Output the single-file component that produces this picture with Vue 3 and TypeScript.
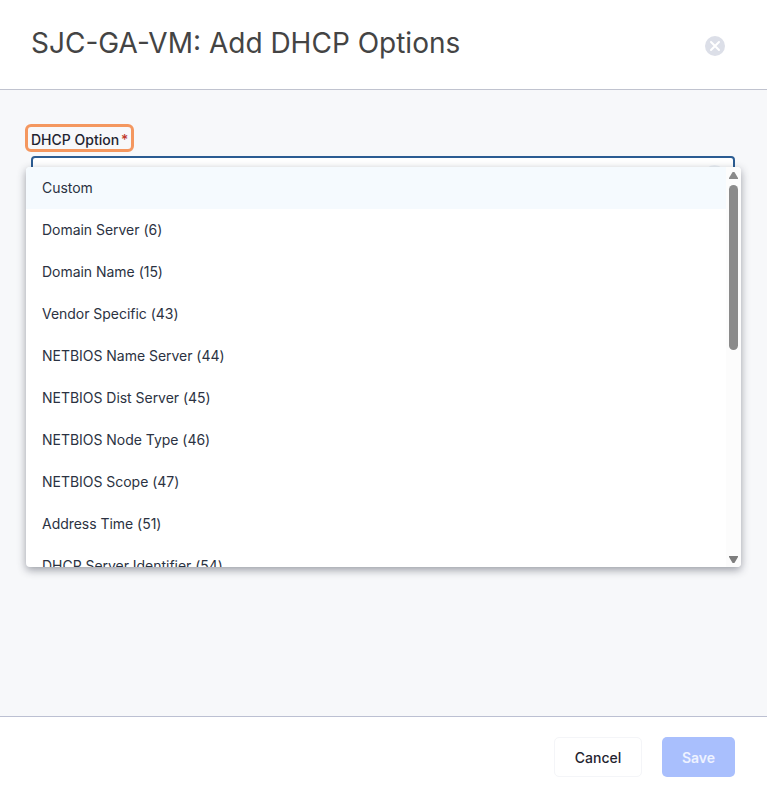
<script setup lang="ts">
const options: string[] = [
  'Custom',
  'Domain Server (6)',
  'Domain Name (15)',
  'Vendor Specific (43)',
  'NETBIOS Name Server (44)',
  'NETBIOS Dist Server (45)',
  'NETBIOS Node Type (46)',
  'NETBIOS Scope (47)',
  'Address Time (51)',
  'DHCP Server Identifier (54)',
]
</script>

<template>
  <div class="dialog">
    <header class="head">
      <h1 class="title">SJC-GA-VM: Add DHCP Options</h1>
      <button class="close" aria-label="Close">
        <svg width="20" height="20" viewBox="0 0 20 20">
          <circle cx="10" cy="10" r="10" fill="#dcdfe8" />
          <path d="M6 6l8 8M14 6l-8 8" stroke="#fff" stroke-width="2" stroke-linecap="round" />
        </svg>
      </button>
    </header>
    <main class="body">
      <div class="field">
        <label class="label">DHCP Option<span class="req">*</span></label>
        <div class="input"><span class="clear"></span></div>
        <div class="menu">
          <ul class="list">
            <li v-for="(o, i) in options" :key="o" class="opt" :class="{ active: i === 0 }">{{ o }}</li>
          </ul>
          <div class="scroll">
            <svg class="arrow" width="9" height="7" viewBox="0 0 9 7"><path d="M3.6 0h1.8L9 6v1H0V6z" fill="#8a8a8a" /></svg>
            <div class="track"><div class="thumb"></div></div>
            <svg class="arrow" width="9" height="7" viewBox="0 0 9 7"><path d="M0 0h9v1L5.4 7H3.6L0 1z" fill="#7d7d7d" /></svg>
          </div>
        </div>
      </div>
    </main>
    <footer class="foot">
      <button class="btn cancel">Cancel</button>
      <button class="btn save">Save</button>
    </footer>
  </div>
</template>

<style>
html, body { margin: 0; background: #fff; }
</style>

<style scoped>
.dialog {
  width: 767px;
  height: 796px;
  display: flex;
  flex-direction: column;
  font-family: Inter, "Liberation Sans", sans-serif;
  background: #fff;
  overflow: hidden;
}
.head {
  height: 89px;
  flex: none;
  display: flex;
  justify-content: space-between;
  padding: 0 42px 0 31px;
  border-bottom: 1px solid #c0c3cf;
  box-sizing: content-box;
}
.title {
  margin: 25px 0 0;
  font-size: 28px;
  line-height: 36px;
  font-weight: 400;
  color: #444;
}
.close {
  margin-top: 36px;
  width: 20px;
  height: 20px;
  padding: 0;
  border: 0;
  background: none;
  display: block;
}
.close svg { display: block; }
.body {
  flex: 1;
  background: #f7f8fa;
  padding: 37px 32px 0 31px;
}
.field { position: relative; }
.label {
  display: block;
  width: fit-content;
  height: 22px;
  margin-left: -3px;
  padding: 0 3px;
  font-size: 14px;
  line-height: 26px;
  font-weight: 450;
  color: #1f2430;
  border-radius: 3px;
  outline: 3px solid #f4975f;
  outline-offset: 0;
}
.req { color: #c0392b; margin-left: 2px; }
.input {
  position: relative;
  height: 40px;
  margin-top: 7px;
  box-sizing: border-box;
  border: 2px solid #2b5c92;
  border-radius: 4px;
  background: #fff;
}
.clear {
  position: absolute;
  right: 8px;
  top: 7px;
  width: 21px;
  height: 21px;
  border-radius: 50%;
  background: #eef2f7;
}
.menu {
  position: absolute;
  left: -5px;
  top: 40px;
  width: 715px;
  height: 400px;
  display: flex;
  background: #fff;
  border-radius: 4px;
  box-shadow: 0 3px 8px rgba(40, 44, 60, 0.45);
  overflow: hidden;
}
.list {
  flex: 1;
  margin: 0;
  padding: 0;
  list-style: none;
  overflow: hidden;
}
.opt {
  height: 42px;
  line-height: 42px;
  padding-left: 16px;
  font-size: 14px;
  letter-spacing: -0.03px;
  color: #2b3242;
}
.opt.active { background: #f5fafe; }
.scroll {
  width: 15px;
  flex: none;
  display: flex;
  flex-direction: column;
  align-items: center;
  background: #fcfcfc;
  padding: 5px 0 4px;
  box-sizing: border-box;
}
.arrow { display: block; flex: none; }
.track { flex: 1; width: 9px; padding-top: 6px; }
.thumb { height: 165px; width: 9px; border-radius: 5px; background: #8b8b8b; }
.foot {
  height: 80px;
  flex: none;
  box-sizing: border-box;
  border-top: 1px solid #bcc0d2;
  display: flex;
  justify-content: flex-end;
  align-items: flex-start;
  gap: 20px;
  padding: 20px 32px 0 0;
}
.btn {
  height: 40px;
  border-radius: 5px;
  font-family: inherit;
  font-size: 14px;
  font-weight: 500;
}
.cancel {
  width: 88px;
  background: #fff;
  border: 1px solid #f4f5f8;
  color: #1f2430;
}
.save {
  width: 73px;
  background: #a9bffd;
  border: 0;
  color: #eef2ff;
  font-weight: 600;
}
</style>
